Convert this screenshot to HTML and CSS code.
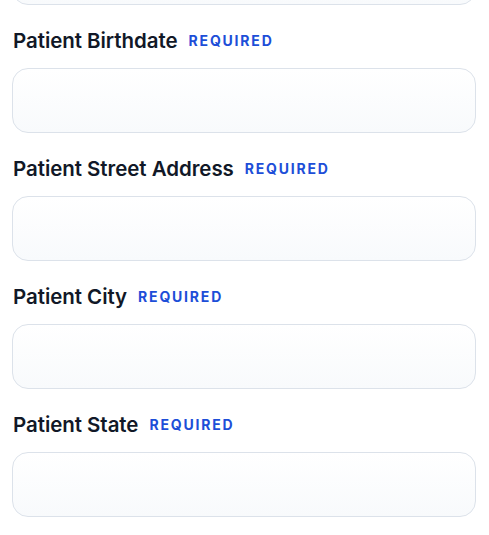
FILE: index.html
```html
<!DOCTYPE html>
<html lang="en">
<head>
<meta charset="utf-8">
<title>Patient form</title>
<link rel="stylesheet" href="styles.css">
</head>
<body>
<form class="form">
  <div class="field field-cut">
    <div class="input"></div>
  </div>
  <div class="field">
    <label class="label"><span class="label-text">Patient Birthdate</span><span class="req">REQUIRED</span></label>
    <div class="input"></div>
  </div>
  <div class="field">
    <label class="label"><span class="label-text">Patient Street Address</span><span class="req">REQUIRED</span></label>
    <div class="input"></div>
  </div>
  <div class="field">
    <label class="label"><span class="label-text">Patient City</span><span class="req">REQUIRED</span></label>
    <div class="input"></div>
  </div>
  <div class="field">
    <label class="label"><span class="label-text">Patient State</span><span class="req">REQUIRED</span></label>
    <div class="input"></div>
  </div>
</form>
</body>
</html>
```
FILE: styles.css
```css
html, body {
  margin: 0;
  padding: 0;
  background: #ffffff;
}
body {
  font-family: Inter, "Noto Sans", "Liberation Sans", sans-serif;
  color: #111827;
}
.form {
  display: flex;
  flex-direction: column;
  gap: 22px;
  padding: 0 13px 0 12px;
  margin-top: -60px;
}
.field {
  display: flex;
  flex-direction: column;
  gap: 13px;
}
.label {
  display: flex;
  align-items: center;
  height: 28px;
  padding-left: 1px;
}
.label-text {
  font-size: 20.5px;
  font-weight: 600;
  line-height: 28px;
  letter-spacing: -0.05px;
  color: #111827;
}
.req {
  margin-left: 11px;
  font-size: 14px;
  font-weight: 700;
  letter-spacing: 1.8px;
  color: #1d4ed8;
  line-height: 20px;
}
.input {
  height: 63px;
  border: 1px solid #dce2ea;
  border-radius: 16px;
  background: linear-gradient(180deg, #ffffff 0%, #f8fafc 100%);
}
```
